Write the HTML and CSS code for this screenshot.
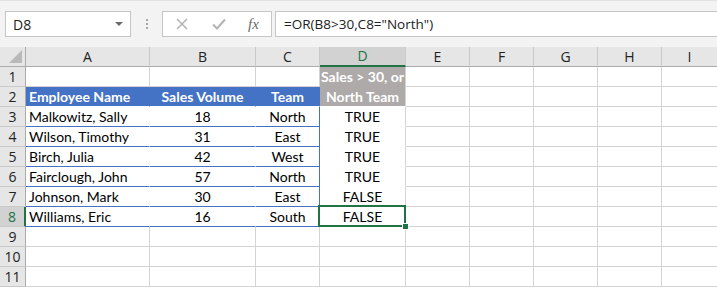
FILE: index.html
```
<!DOCTYPE html>
<html lang="en">
<head>
<meta charset="UTF-8">
<title>OR function</title>
<link rel="stylesheet" href="styles.css">
</head>
<body>
<div class="app">
	<div class="toolbar">
		<div class="namebox">
			<span>D8</span>
			<span class="caret"></span>
		</div>
		<div class="grip"><i></i><i></i><i></i></div>
		<div class="btns">
			<svg width="12" height="12" viewBox="0 0 12 12"><path d="M1 1L11 11M11 1L1 11" stroke="#b3b3b3" stroke-width="1.5" fill="none"/></svg>
			<svg width="14" height="12" viewBox="0 0 14 12"><path d="M1 6.5L5 10.5L13 1.5" stroke="#b3b3b3" stroke-width="2" fill="none"/></svg>
			<span class="fx">fx</span>
		</div>
		<div class="formula">=OR(B8&gt;30,C8="North")</div>
	</div>

	<div class="sheet">
		<!-- column headers -->
		<div class="corner"><svg width="13" height="13" viewBox="0 0 13 13"><path d="M13 0V13H0Z" fill="#b9b9b9"/></svg></div>
		<div class="ch">A</div>
		<div class="ch">B</div>
		<div class="ch">C</div>
		<div class="ch on">D</div>
		<div class="ch">E</div>
		<div class="ch">F</div>
		<div class="ch">G</div>
		<div class="ch">H</div>
		<div class="ch last">I</div>

		<!-- row 1 -->
		<div class="rh">1</div>
		<div class="c"></div>
		<div class="c"></div>
		<div class="c"></div>
		<div class="c gray">Sales &gt; 30, or<br>North Team</div>
		<div class="c"></div>
		<div class="c"></div>
		<div class="c"></div>
		<div class="c"></div>
		<div class="c last"></div>

		<!-- row 2 -->
		<div class="rh">2</div>
		<div class="c hd left">Employee Name</div>
		<div class="c hd">Sales Volume</div>
		<div class="c hd">Team</div>
		<div class="c"></div>
		<div class="c"></div>
		<div class="c"></div>
		<div class="c"></div>
		<div class="c last"></div>

		<div class="rh">3</div>
		<div class="c t left">Malkowitz, Sally</div>
		<div class="c t">18</div>
		<div class="c t end">North</div>
		<div class="c res">TRUE</div>
		<div class="c"></div>
		<div class="c"></div>
		<div class="c"></div>
		<div class="c"></div>
		<div class="c last"></div>

		<div class="rh">4</div>
		<div class="c t left">Wilson, Timothy</div>
		<div class="c t">31</div>
		<div class="c t end">East</div>
		<div class="c res">TRUE</div>
		<div class="c"></div>
		<div class="c"></div>
		<div class="c"></div>
		<div class="c"></div>
		<div class="c last"></div>

		<div class="rh">5</div>
		<div class="c t left">Birch, Julia</div>
		<div class="c t">42</div>
		<div class="c t end">West</div>
		<div class="c res">TRUE</div>
		<div class="c"></div>
		<div class="c"></div>
		<div class="c"></div>
		<div class="c"></div>
		<div class="c last"></div>

		<div class="rh">6</div>
		<div class="c t left">Fairclough, John</div>
		<div class="c t">57</div>
		<div class="c t end">North</div>
		<div class="c res">TRUE</div>
		<div class="c"></div>
		<div class="c"></div>
		<div class="c"></div>
		<div class="c"></div>
		<div class="c last"></div>

		<div class="rh">7</div>
		<div class="c t left">Johnson, Mark</div>
		<div class="c t">30</div>
		<div class="c t end">East</div>
		<div class="c res">FALSE</div>
		<div class="c"></div>
		<div class="c"></div>
		<div class="c"></div>
		<div class="c"></div>
		<div class="c last"></div>

		<div class="rh on">8</div>
		<div class="c t left">Williams, Eric</div>
		<div class="c t">16</div>
		<div class="c t end">South</div>
		<div class="c sel">FALSE</div>
		<div class="c"></div>
		<div class="c"></div>
		<div class="c"></div>
		<div class="c"></div>
		<div class="c last"></div>

		<div class="rh">9</div>
		<div class="c"></div><div class="c"></div><div class="c"></div><div class="c"></div>
		<div class="c"></div><div class="c"></div><div class="c"></div><div class="c"></div><div class="c last"></div>

		<div class="rh">10</div>
		<div class="c"></div><div class="c"></div><div class="c"></div><div class="c"></div>
		<div class="c"></div><div class="c"></div><div class="c"></div><div class="c"></div><div class="c last"></div>

		<div class="rh">11</div>
		<div class="c"></div><div class="c"></div><div class="c"></div><div class="c"></div>
		<div class="c"></div><div class="c"></div><div class="c"></div><div class="c"></div><div class="c last"></div>
	</div>
</div>
</body>
</html>
```

FILE: styles.css
```
body {
	margin: 0;
	padding: 0;
	background: #fff;
}

.app {
	width: 717px;
	height: 288px;
	overflow: hidden;
}

/* formula bar */
.toolbar {
	height: 47px;
	box-sizing: border-box;
	background: #f3f3f3;
	border-top: 1px solid #e2e2e2;
	padding: 10px 0 0 5px;
	display: flex;
	align-items: flex-start;
	font-family: "Open Sans", "Noto Sans", sans-serif;
	font-size: 14px;
	color: #222;
}

.namebox {
	width: 126px;
	height: 26px;
	box-sizing: border-box;
	background: #fff;
	border: 1px solid #c6c6c6;
	display: flex;
	align-items: center;
	justify-content: space-between;
	padding: 0 7px 0 7px;
}

.caret {
	width: 0;
	height: 0;
	border-left: 4px solid transparent;
	border-right: 4px solid transparent;
	border-top: 4px solid #6a6a6a;
}

.grip {
	width: 31px;
	height: 26px;
	display: flex;
	flex-direction: column;
	align-items: center;
	justify-content: center;
	gap: 2px;
}

.grip i {
	width: 2px;
	height: 2px;
	background: #a8a8a8;
}

.btns {
	width: 110px;
	height: 26px;
	box-sizing: border-box;
	background: #fff;
	border: 1px solid #c6c6c6;
	display: flex;
	align-items: center;
	gap: 24px;
	padding-left: 13px;
}

.btns .fx {
	font-family: "Liberation Serif", serif;
	font-style: italic;
	font-size: 15px;
	color: #6a6a6a;
	margin-left: -2px;
}

.formula {
	flex: 1;
	height: 26px;
	box-sizing: border-box;
	margin-left: 3px;
	background: #fff;
	border: 1px solid #c6c6c6;
	border-right: none;
	padding-left: 8px;
	line-height: 24px;
	font-size: 13.5px;
}

/* sheet */
.sheet {
	display: grid;
	grid-template-columns: 26px 124px 106px 64px 86px 64px 64px 64px 64px 1fr;
	grid-auto-rows: 20px;
	font-family: "Lato", "Liberation Sans", sans-serif;
	font-size: 14px;
	color: #000;
}

.sheet > div {
	box-sizing: border-box;
}

.corner,
.ch,
.rh {
	background: #e6e6e6;
	font-family: "Open Sans", "Noto Sans", sans-serif;
	font-size: 14px;
	color: #222;
	display: flex;
	align-items: center;
	justify-content: center;
}

.corner {
	border-right: 1px solid #ababab;
	border-bottom: 1px solid #ababab;
	justify-content: flex-end;
	align-items: flex-end;
	padding: 0 3px 3px 0;
}

.ch {
	border-right: 1px solid #c9c9c9;
	border-bottom: 1px solid #ababab;
	padding-bottom: 1px;
}

.ch.on {
	background: #d2d2d2;
	color: #217346;
	border-bottom: 2px solid #217346;
}

.rh {
	border-right: 1px solid #ababab;
	border-bottom: 1px solid #c9c9c9;
}

.rh.on {
	background: #d2d2d2;
	color: #217346;
	border-right: 2px solid #217346;
}

.c {
	border-right: 1px solid #d4d4d4;
	border-bottom: 1px solid #d4d4d4;
	line-height: 20px;
	text-align: center;
	white-space: nowrap;
	overflow: hidden;
}

.last {
	border-right: none;
}

.left {
	text-align: left;
	padding-left: 3px;
}

.hd {
	background: #4472c4;
	color: #fff;
	font-weight: bold;
	border-right-color: #4472c4;
	border-bottom-color: #fff;
}

.gray {
	grid-row: span 2;
	background: #aeaaaa;
	color: #fff;
	font-weight: bold;
	line-height: 20px;
	border-bottom-color: #fff;
}

.t {
	border-right-color: #fff;
	border-bottom-color: #4472c4;
}

.t.end {
	border-right-color: #4472c4;
}

.res {
	border-bottom-color: #fff;
}

.sel {
	position: relative;
	overflow: visible;
}

.sel::after {
	content: "";
	position: absolute;
	top: -2px;
	left: -2px;
	right: -1px;
	bottom: -1px;
	border: 2px solid #217346;
}

.sel::before {
	content: "";
	position: absolute;
	right: -4px;
	bottom: -4px;
	width: 5px;
	height: 5px;
	background: #217346;
	border: 1px solid #fff;
	z-index: 1;
}
```
